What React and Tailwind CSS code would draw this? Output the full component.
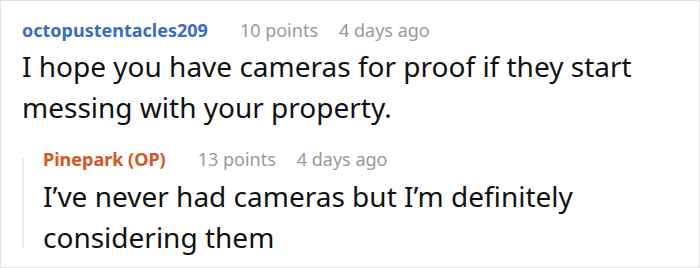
const Meta = ({ name, color, points, time }) => (
  <div className="flex items-baseline text-[18px] leading-[24px]">
    <span className={`font-bold ${color}`}>{name}</span>
    <span className="ml-8 text-[#999999]">{points}</span>
    <span className="ml-[21px] text-[#999999]">{time}</span>
  </div>
);

export default function App() {
  return (
    <div
      className="w-[700px] h-[268px] bg-white border border-[#e3e3e3] overflow-hidden"
      style={{ fontFamily: '"Noto Sans", "Open Sans", sans-serif' }}
    >
      <div className="pl-[21px] pt-[17px]">
        <Meta
          name="octopustentacles209"
          color="text-[#3b6cc0]"
          points="10 points"
          time="4 days ago"
        />
        <p className="mt-[4px] text-[28px] leading-[41px] text-[#111111] w-[660px]">
          I hope you have cameras for proof if they start messing with your property.
        </p>
        <div className="mt-[19px] flex">
          <div className="w-[2px] bg-[#e8e8e8] mt-[11px] mb-[10px]" />
          <div className="pl-[19px]">
            <Meta
              name="Pinepark (OP)"
              color="text-[#d9541f]"
              points="13 points"
              time="4 days ago"
            />
            <p className="mt-[5px] text-[28px] leading-[41px] text-[#111111] w-[560px]">
              I’ve never had cameras but I’m definitely considering them
            </p>
          </div>
        </div>
      </div>
    </div>
  );
}
